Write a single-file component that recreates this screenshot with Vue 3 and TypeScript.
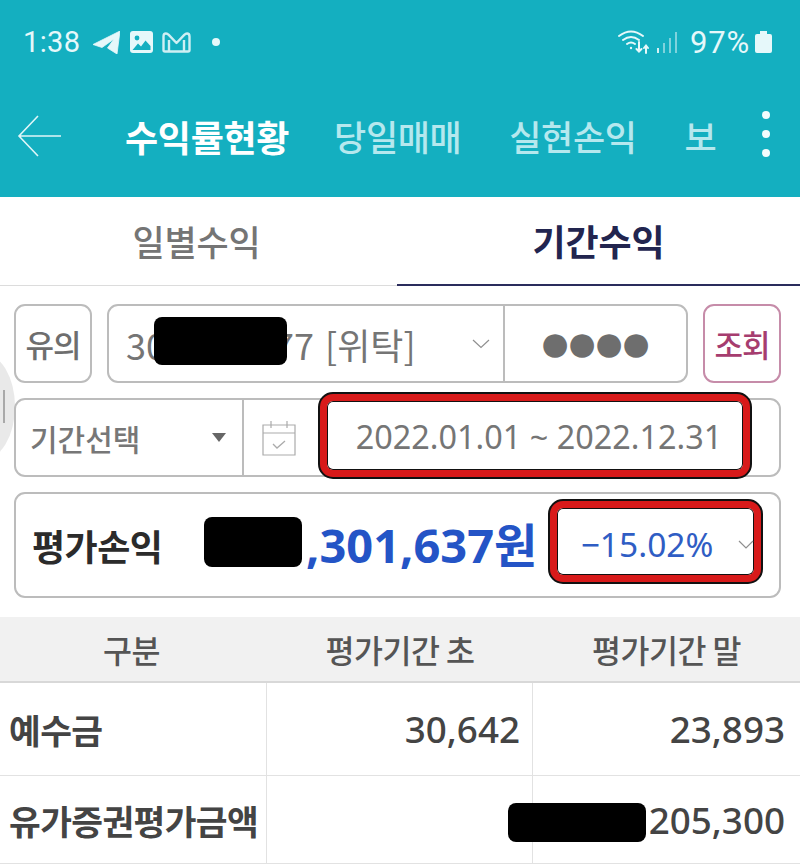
<script setup lang="ts">
const topTabs: string[] = ['수익률현황', '당일매매', '실현손익', '보']
const rows = [
  { label: '예수금', start: '30,642', end: '23,893' },
  { label: '유가증권평가금액', start: '', end: '205,300' },
]
</script>

<template>
  <div class="page">
    <header class="hero">
      <div class="status">
        <div class="status-left">
          <span class="time">1:38</span>
          <svg width="27" height="23" viewBox="0 0 27 23"><path d="M0 13.500 27 0 24 23 14.500 17 21 8 9 16.500Z" fill="#e6f8fa" stroke="#e6f8fa" stroke-width="0.800" stroke-linejoin="round"/></svg>
          <svg width="23" height="22" viewBox="0 0 23 22"><rect width="23" height="22" rx="3" fill="#e6f8fa"/><circle cx="7" cy="7" r="2.400" fill="#14afc0"/><path d="M2.500 19 8 12.500l3 3 4.500-6L20.500 15v4Z" fill="#14afc0"/></svg>
          <svg class="mail" width="29" height="21" viewBox="0 0 29 21"><path d="M1.500 18V4.500Q1.500 1.500 4 1.500 5.500 1.500 6.500 2.700L14.500 11l8-8.300Q23.500 1.500 25 1.500q2.500 0 2.500 3V18q0 1.500-1.500 1.500H3Q1.500 19.500 1.500 18ZM7 8v11M22 8v11" fill="none" stroke="#cfeff3" stroke-width="2.400" stroke-linejoin="round"/></svg>
          <span class="dot"></span>
        </div>
        <div class="status-right">
          <svg width="31" height="26" viewBox="0 0 31 26" fill="none" stroke="#e6f8fa" stroke-width="2" stroke-linecap="round"><path d="M1 7Q13-2 25 7M5 11Q13 5 21 11M9 15Q13 12 17 15"/><circle cx="13" cy="19" r="1.200" fill="#e6f8fa" stroke="none"/><path d="M21 13v9M18.500 20l2.500 2.500 2.500-2.500M28 24v-7M26 19l2-2.500 2 2.500"/></svg>
          <svg class="signal" width="21" height="21" viewBox="0 0 21 21"><rect x="1" y="16" width="2" height="5" fill="#d5f1f4"/><rect x="7" y="11" width="2" height="10" fill="#7fd3dd"/><rect x="13" y="6" width="2" height="15" fill="#7fd3dd"/><rect x="19" y="0" width="2" height="21" fill="#7fd3dd"/></svg>
          <span class="pct">97%</span>
          <span class="battery"></span>
        </div>
      </div>
      <nav class="nav">
        <svg class="back" width="46" height="42" viewBox="0 0 46 42" fill="none" stroke="#dff6f8" stroke-width="1.600"><path d="M44 21H2M21 1 2 21l19 20"/></svg>
        <div class="nav-tabs">
          <span v-for="(t, i) in topTabs" :key="t" class="nav-tab" :class="{ on: i === 0 }">{{ t }}</span>
        </div>
        <div class="more"><i></i><i></i><i></i></div>
      </nav>
    </header>

    <div class="tabs">
      <div class="tab">일별수익</div>
      <div class="tab active">기간수익</div>
    </div>

    <section class="form">
      <span class="handle"><i></i></span>
      <div class="line">
        <button class="square">유의</button>
        <div class="box account">
          <div class="acc">
            <span class="acc-text">30<span class="gap"></span>77 [위탁]<span class="mask m1"></span></span>
            <svg width="18" height="10" viewBox="0 0 18 10" fill="none" stroke="#8f8f8f" stroke-width="1.200"><path d="M1 1l8 7.500L17 1"/></svg>
          </div>
          <div class="pw">●●●●</div>
        </div>
        <button class="square query">조회</button>
      </div>

      <div class="box period">
        <div class="pick"><span>기간선택</span><em></em></div>
        <div class="dates">
          <svg width="36" height="36" viewBox="0 0 36 36" fill="none" stroke="#ababab" stroke-width="1.200"><path d="M2 5h32v30H2zM2 13h32M10 1v7M26 1v7"/><path d="M12 24l4 4 8-7" stroke-width="1.300"/></svg>
          <div class="range highlight">2022.01.01 ~ 2022.12.31</div>
        </div>
      </div>

      <div class="box eval">
        <span class="eval-label">평가손익</span>
        <span class="eval-value"><span class="mask m2"></span>,301,637원</span>
        <div class="rate highlight">−15.02%</div>
        <svg class="rate-chev" width="16" height="9" viewBox="0 0 16 9" fill="none" stroke="#8f8f8f" stroke-width="1.200"><path d="M1 1l7 7 7-7"/></svg>
      </div>
    </section>

    <div class="table">
      <div class="th first">구분</div>
      <div class="th">평가기간 초</div>
      <div class="th">평가기간 말</div>
      <template v-for="(r, i) in rows" :key="r.label">
        <div class="td label">{{ r.label }}</div>
        <div class="td num mid"><span v-if="i === 1" class="mask m3"></span>{{ r.start }}</div>
        <div class="td num">{{ r.end }}</div>
      </template>
    </div>
  </div>
</template>

<style>
html, body { margin: 0; background: #fff; }
</style>

<style scoped>
.page {
  position: relative;
  width: 800px;
  height: 864px;
  overflow: hidden;
  background: #fff;
  font-family: "Noto Sans CJK KR", "Noto Sans", sans-serif;
  color: #6e6e6e;
}
.hero { height: 197px; background: #14afc0; }
.status {
  height: 84px;
  padding: 0 28px 0 23px;
  display: flex;
  align-items: center;
  justify-content: space-between;
  box-sizing: border-box;
}
.status-left, .status-right { display: flex; align-items: center; }
.status-left { gap: 10px; }
.time, .pct { font-family: "Roboto", sans-serif; color: #e6f8fa; line-height: 1; }
.time { font-size: 29px; margin-right: 2px; letter-spacing: 0.4px; }
.mail { margin-left: -1px; }
.signal { margin-left: 7px; }
.pct { font-size: 31px; margin-left: 13px; letter-spacing: 0.8px; }
.dot { width: 8px; height: 8px; border-radius: 50%; background: #e6f8fa; margin-left: 11px; }
.battery {
  position: relative;
  width: 17px;
  height: 19px;
  background: #e6f8fa;
  border-radius: 2px;
  margin: 3px 0 0 5px;
}
.battery::before {
  content: "";
  position: absolute;
  left: 5px;
  top: -3px;
  width: 7px;
  height: 3px;
  background: #e6f8fa;
}
.nav { position: relative; height: 113px; display: flex; align-items: flex-start; }
.back { margin: 31px 0 0 17px; flex: none; }
.nav-tabs { margin: 26px 0 0 62px; display: flex; gap: 48px; width: 593px; overflow: hidden; white-space: nowrap; }
.nav-tab { font-size: 35px; line-height: 52px; font-weight: 500; color: #b5e8ee; letter-spacing: -0.4px; }
.nav-tab.on { color: #fff; font-weight: 700; font-size: 36px; letter-spacing: -0.3px; margin-right: -3px; }
.more { position: absolute; left: 762px; top: 27px; display: flex; flex-direction: column; gap: 11px; }
.more i { width: 8px; height: 8px; border-radius: 50%; background: #f3fcfd; }

.tabs { display: grid; grid-template-columns: 397px 403px; height: 89px; border-bottom: 1px solid #dcdcdc; box-sizing: border-box; }
.tab { font-size: 35px; font-weight: 500; display: flex; align-items: center; justify-content: center; color: #757575; padding: 0 4px 2px 0; letter-spacing: -0.2px; }
.tab.active { color: #22254f; font-weight: 700; font-size: 36px; border-bottom: 2px solid #2a2c5c; margin-bottom: -1px; letter-spacing: -0.1px; padding-right: 0; }

.form { position: relative; padding: 18px 19px 19px 14px; display: flex; flex-direction: column; gap: 15px; }
.handle {
  position: absolute;
  left: -50px;
  top: 67px;
  width: 65px;
  height: 107px;
  border-radius: 50%;
  background: #e9e9e9;
}
.handle i { position: absolute; left: 53px; top: 37px; width: 2px; height: 33px; background: #a9a9a9; }
.line { position: relative; display: flex; gap: 15px; height: 79px; }
.box {
  position: relative;
  background: #fff;
  border: 2px solid #bcbcbc;
  border-radius: 11px;
  box-sizing: border-box;
}
.square {
  position: relative;
  width: 78px;
  flex: none;
  padding: 0;
  background: #fff;
  border: 2px solid #bcbcbc;
  border-radius: 11px;
  font: 500 31px "Noto Sans CJK KR", sans-serif;
  color: #6e6e6e;
  letter-spacing: -1px;
}
.query { border-color: #c68ca9; color: #a63d6f; }
.account { flex: 1; display: flex; }
.acc {
  flex: 1;
  display: flex;
  align-items: center;
  justify-content: space-between;
  padding: 0 13px 0 17px;
  border-right: 2px solid #bcbcbc;
}
.acc-text { position: relative; font-size: 36px; line-height: 48px; color: #757575; white-space: nowrap; word-spacing: 3px; }
.gap { display: inline-block; width: 108px; }
.pw { width: 181px; display: flex; align-items: center; justify-content: center; font-family: "DejaVu Sans", sans-serif; font-size: 31px; color: #6e6e6e; padding-bottom: 2px; box-sizing: border-box; }
.mask { position: absolute; background: #000; border-radius: 8px; display: block; }
.m1 { left: 28px; top: -3px; width: 133px; height: 48px; }
.period { height: 79px; display: flex; }
.pick {
  width: 228px;
  flex: none;
  display: flex;
  align-items: center;
  justify-content: space-between;
  padding: 0 16px 0 14px;
  box-sizing: border-box;
  border-right: 2px solid #bcbcbc;
  font-size: 30px;
  font-weight: 500;
  color: #777;
}
.pick em { width: 0; height: 0; border-left: 7px solid transparent; border-right: 7px solid transparent; border-top: 9px solid #666; }
.dates { flex: 1; display: flex; align-items: center; padding-left: 17px; }
.highlight {
  position: absolute;
  box-sizing: border-box;
  background: #fff;
  border-radius: 14px;
  border: 8px solid #d81a1a;
  outline: 2px solid #111;
  outline-offset: -1px;
  box-shadow: inset 0 0 0 1px #111;
  display: flex;
  align-items: center;
  justify-content: center;
}
.range {
  left: 303px;
  top: -7px;
  width: 432px;
  height: 85px;
  padding-left: 8px;
  font-family: "Noto Sans", sans-serif;
  font-size: 32.4px;
  color: #757575;
  white-space: nowrap;
}
.eval { height: 106px; display: flex; align-items: center; padding-left: 16px; }
.eval-label { font-size: 36px; font-weight: 700; color: #2b2b2b; width: 172px; flex: none; letter-spacing: -0.5px; }
.eval-value { position: relative; padding-left: 120px; margin-left: -18px; font-size: 47px; line-height: 60px; font-weight: 700; color: #2454c6; white-space: nowrap; font-family: "Noto Sans", "Noto Sans CJK KR", sans-serif; }
.m2 { left: 18px; top: 2px; width: 98px; height: 50px; }
.rate {
  left: 533px;
  top: 6px;
  width: 213px;
  height: 83px;
  font-family: "Noto Sans", sans-serif;
  font-size: 33.5px;
  color: #2f5dc4;
  padding: 5px 17px 0 0;
}
.rate-chev { position: absolute; left: 722px; top: 46px; z-index: 1; }

.table {
  display: grid;
  grid-template-columns: 267px 266px 267px;
  grid-template-rows: 66px 93px 88px;
}
.th {
  background: #f1f1f1;
  border-bottom: 2px solid #d8d8d8;
  display: flex;
  align-items: center;
  justify-content: center;
  font-size: 31.500px;
  font-weight: 500;
  color: #555;
  letter-spacing: -0.5px;
  box-sizing: border-box;
}
.th.first { padding-right: 4px; }
.td {
  position: relative;
  border-bottom: 1px solid #e2e2e2;
  display: flex;
  align-items: center;
  font-size: 36.8px;
  font-weight: 500;
  color: #444;
  box-sizing: border-box;
}
.label { padding-left: 9px; background: #fff; border-right: 1px solid #e2e2e2; font-weight: 700; font-size: 34.5px; letter-spacing: -0.6px; white-space: nowrap; }
.num { justify-content: flex-end; padding-right: 15px; border-right: 1px solid #e2e2e2; font-family: "Noto Sans", sans-serif; }
.num.mid { padding-right: 12px; }
.td:nth-child(3n) { border-right: none; }
.m3 { left: 241px; top: 27px; width: 138px; height: 39px; z-index: 1; }
</style>
